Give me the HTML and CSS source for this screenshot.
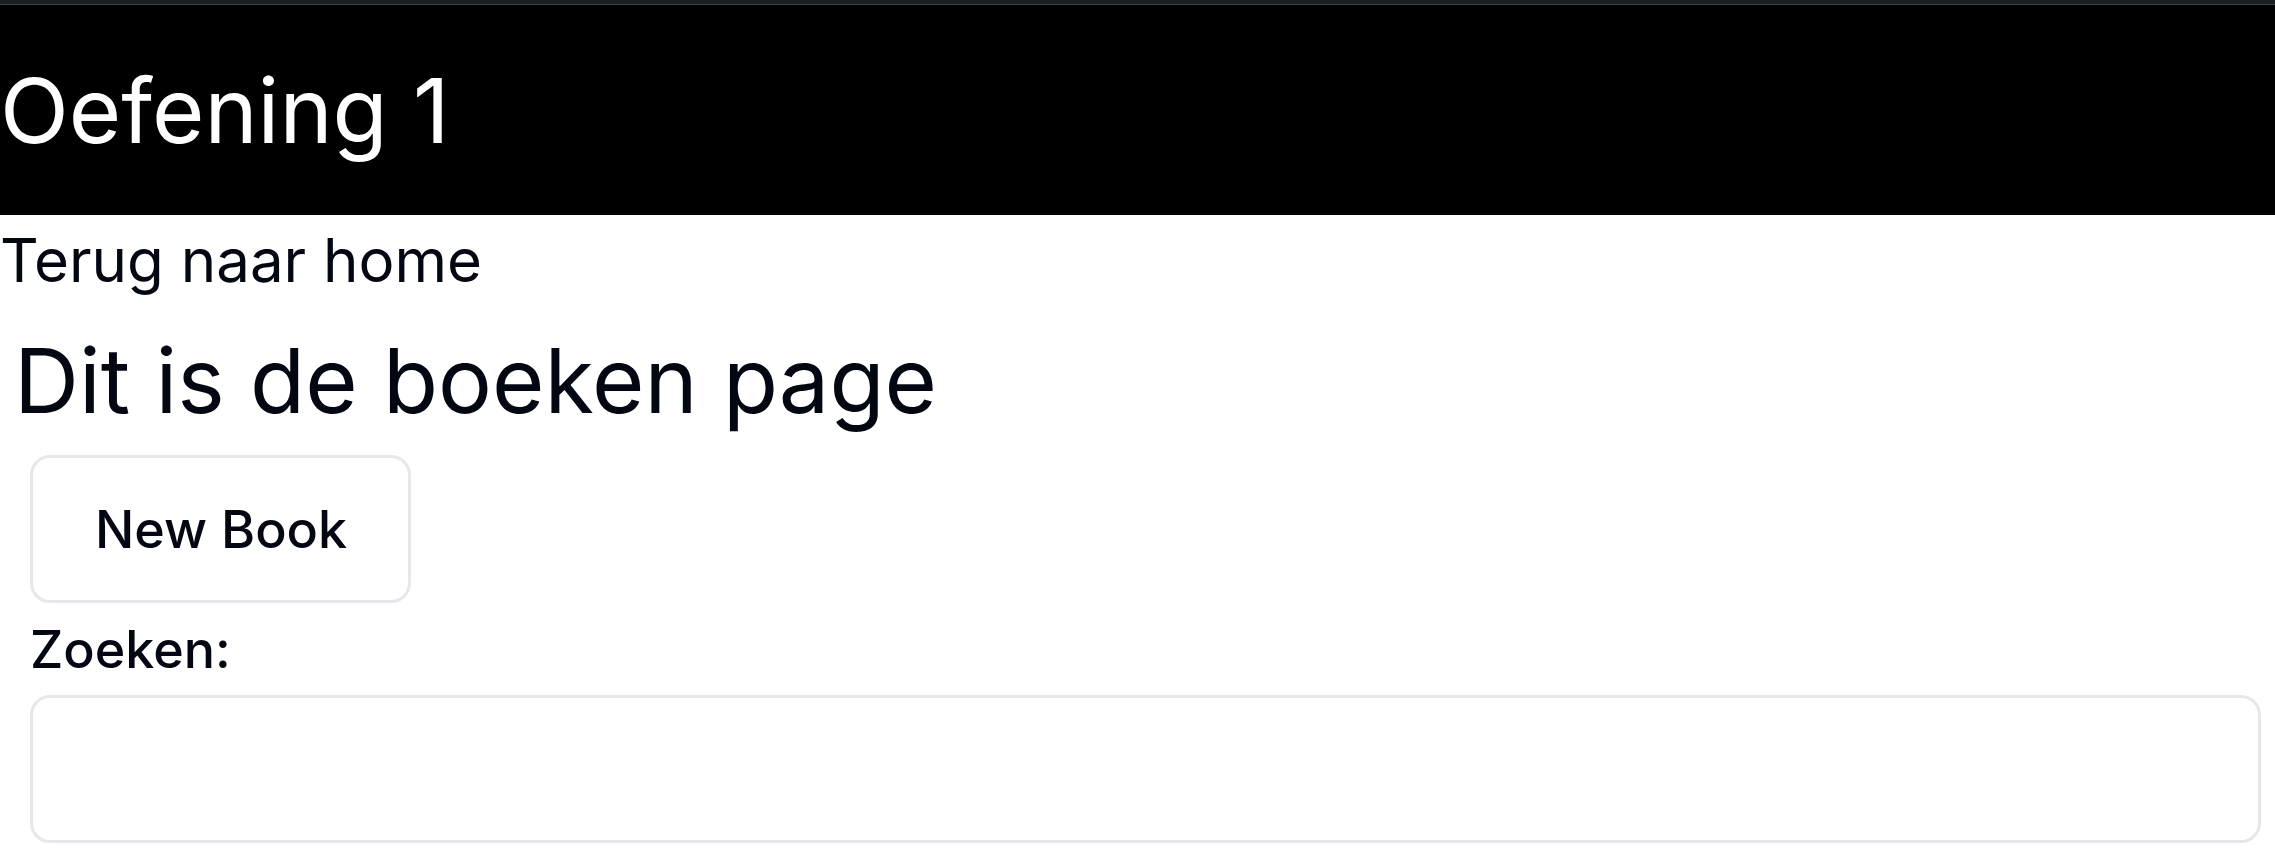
FILE: index.html
```html
<!DOCTYPE html>
<html lang="nl">
<head>
  <meta charset="UTF-8">
  <meta name="viewport" content="width=device-width, initial-scale=1.0">
  <title>Oefening 1</title>
  <link rel="stylesheet" href="styles.css">
</head>
<body>
  <div class="top-strip"></div>

  <!-- Header -->
  <header class="site-header">
    <h1 class="site-title">Oefening 1</h1>
  </header>

  <a href="/" class="home-link">Terug naar home</a>

  <main class="books">
    <h2 class="books-title">Dit is de boeken page</h2>

    <div class="books-body">
      <button class="new-book-btn">New Book</button>

      <label class="search-label" for="search">Zoeken:</label>
      <input class="search-input" type="text" id="search">
    </div>
  </main>
</body>
</html>
```

FILE: styles.css
```css
body {
  margin: 0;
  font-family: Inter, "Noto Sans", sans-serif;
  color: #030712;
  background: #fff;
}

.top-strip {
  height: 4px;
  background: #1a1f25;
  border-bottom: 1px solid #38434d;
}

/* Header */
.site-header {
  height: 210px;
  background: #000;
  display: flex;
  align-items: center;
}

.site-title {
  margin: 0;
  font-size: 90px;
  font-weight: 400;
  color: #fff;
}

.home-link {
  display: block;
  margin-top: 9px;
  font-size: 60px;
  color: #030712;
  text-decoration: none;
}

/* Books section */
.books-title {
  margin: 30px 0 0 14px;
  font-size: 90px;
  font-weight: 400;
}

.books-body {
  padding: 20px 14px 0 30px;
  display: flex;
  flex-direction: column;
  align-items: flex-start;
}

.new-book-btn {
  height: 148px;
  padding: 0 61px 0 62px;
  font-family: inherit;
  font-size: 52px;
  font-weight: 500;
  color: #030712;
  background: #fff;
  border: 3px solid #e5e7eb;
  border-radius: 20px;
  cursor: pointer;
}

.search-label {
  margin-top: 15px;
  font-size: 52px;
  font-weight: 500;
}

.search-input {
  box-sizing: border-box;
  width: 100%;
  height: 148px;
  margin-top: 14px;
  border: 3px solid #e5e7eb;
  border-radius: 20px;
  font-family: inherit;
  font-size: 50px;
  padding: 0 20px;
}
```
